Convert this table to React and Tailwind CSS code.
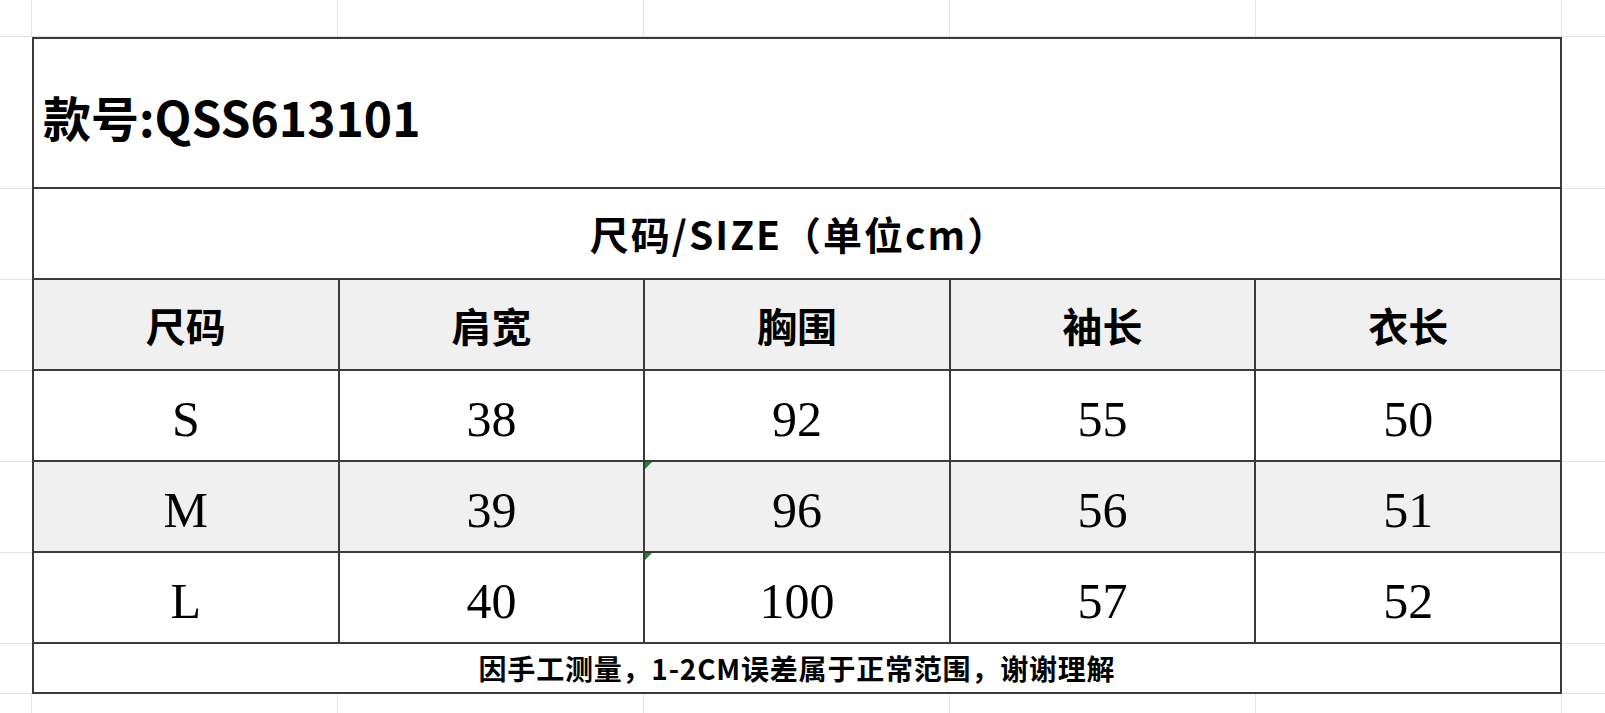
const cols = [0, 1, 2, 3, 4];
const rowHeights = ["h-[152px]", "h-[91px]", "h-[91px]", "h-[91px]", "h-[91px]", "h-[91px]", "h-[50px]"];

const header = ["尺码", "肩宽", "胸围", "袖长", "衣长"];
const rows = [
  { cells: ["S", "38", "92", "55", "50"], shade: false },
  { cells: ["M", "39", "96", "56", "51"], shade: true },
  { cells: ["L", "40", "100", "57", "52"], shade: false },
];

const cjk = "font-['Noto_Sans_CJK_SC',sans-serif]";
const serif = "font-['Liberation_Serif','Noto_Sans_CJK_SC',serif]";

// light spreadsheet gridlines around the table
function GridStrip({ h }) {
  return (
    <div className={`flex ${h}`}>
      <div className="w-[32px] shrink-0 border-r border-b border-[#e3e3e3]" />
      {cols.map((c) => (
        <div key={c} className="w-[306px] shrink-0 border-r border-b border-[#e3e3e3]" />
      ))}
      <div className="flex-1 border-b border-[#e3e3e3]" />
    </div>
  );
}

function SideStrip() {
  return (
    <div className="flex flex-col w-[32px] shrink-0">
      {rowHeights.map((h, i) => (
        <div key={i} className={`${h} border-b border-[#e3e3e3]`} />
      ))}
    </div>
  );
}

function Marker() {
  return (
    <span className="absolute left-0 top-0 w-0 h-0 border-t-[7px] border-t-[#1f8a1f] border-r-[7px] border-r-transparent" />
  );
}

export default function App() {
  return (
    <div className="w-[1605px] h-[713px] bg-white overflow-hidden flex flex-col text-black">
      <GridStrip h="h-[37px]" />

      <div className="flex">
        <SideStrip />

        {/* Size chart */}
        <div className="w-[1530px] shrink-0 border-l-2 border-t-2 border-[#3a3a3a] flex flex-col">
          <div className="h-[150px] border-r-2 border-b-2 border-[#3a3a3a] flex items-center pl-[9px]">
            <span className={`${cjk} font-bold text-[48px] leading-none pt-[6px]`}>
              款号:QSS613101
            </span>
          </div>

          <div className="h-[91px] border-r-2 border-b-2 border-[#3a3a3a] flex items-center justify-center">
            <span className={`${cjk} font-bold text-[39px] leading-none tracking-[2px] pl-[4px]`}>
              尺码/SIZE（单位cm）
            </span>
          </div>

          <div className="grid grid-cols-5 h-[91px] bg-[#f0f0f0]">
            {header.map((t) => (
              <div
                key={t}
                className="border-r-2 border-b-2 border-[#3a3a3a] flex items-center justify-center"
              >
                <span className={`${cjk} font-bold text-[40px] leading-none`}>{t}</span>
              </div>
            ))}
          </div>

          {rows.map((r, ri) => (
            <div
              key={ri}
              className={`grid grid-cols-5 h-[91px] ${r.shade ? "bg-[#f0f0f0]" : "bg-white"}`}
            >
              {r.cells.map((v, ci) => (
                <div
                  key={ci}
                  className="relative border-r-2 border-b-2 border-[#3a3a3a] flex items-center justify-center"
                >
                  {ci === 2 && ri > 0 && <Marker />}
                  <span className={`${serif} text-[50px] leading-none pt-[6px]`}>{v}</span>
                </div>
              ))}
            </div>
          ))}

          <div className="h-[50px] border-r-2 border-b-2 border-[#3a3a3a] flex items-center justify-center">
            <span className={`${cjk} font-bold text-[28px] leading-none tracking-[0.8px]`}>
              因手工测量，1-2CM误差属于正常范围，谢谢理解
            </span>
          </div>
        </div>

        <div className="flex-1 flex flex-col">
          {rowHeights.map((h, i) => (
            <div key={i} className={`${h} border-b border-[#e3e3e3]`} />
          ))}
        </div>
      </div>

      <div className="flex flex-1">
        <div className="w-[32px] shrink-0 border-r border-[#e3e3e3]" />
        {cols.map((c) => (
          <div key={c} className="w-[306px] shrink-0 border-r border-[#e3e3e3]" />
        ))}
        <div className="flex-1" />
      </div>
    </div>
  );
}
